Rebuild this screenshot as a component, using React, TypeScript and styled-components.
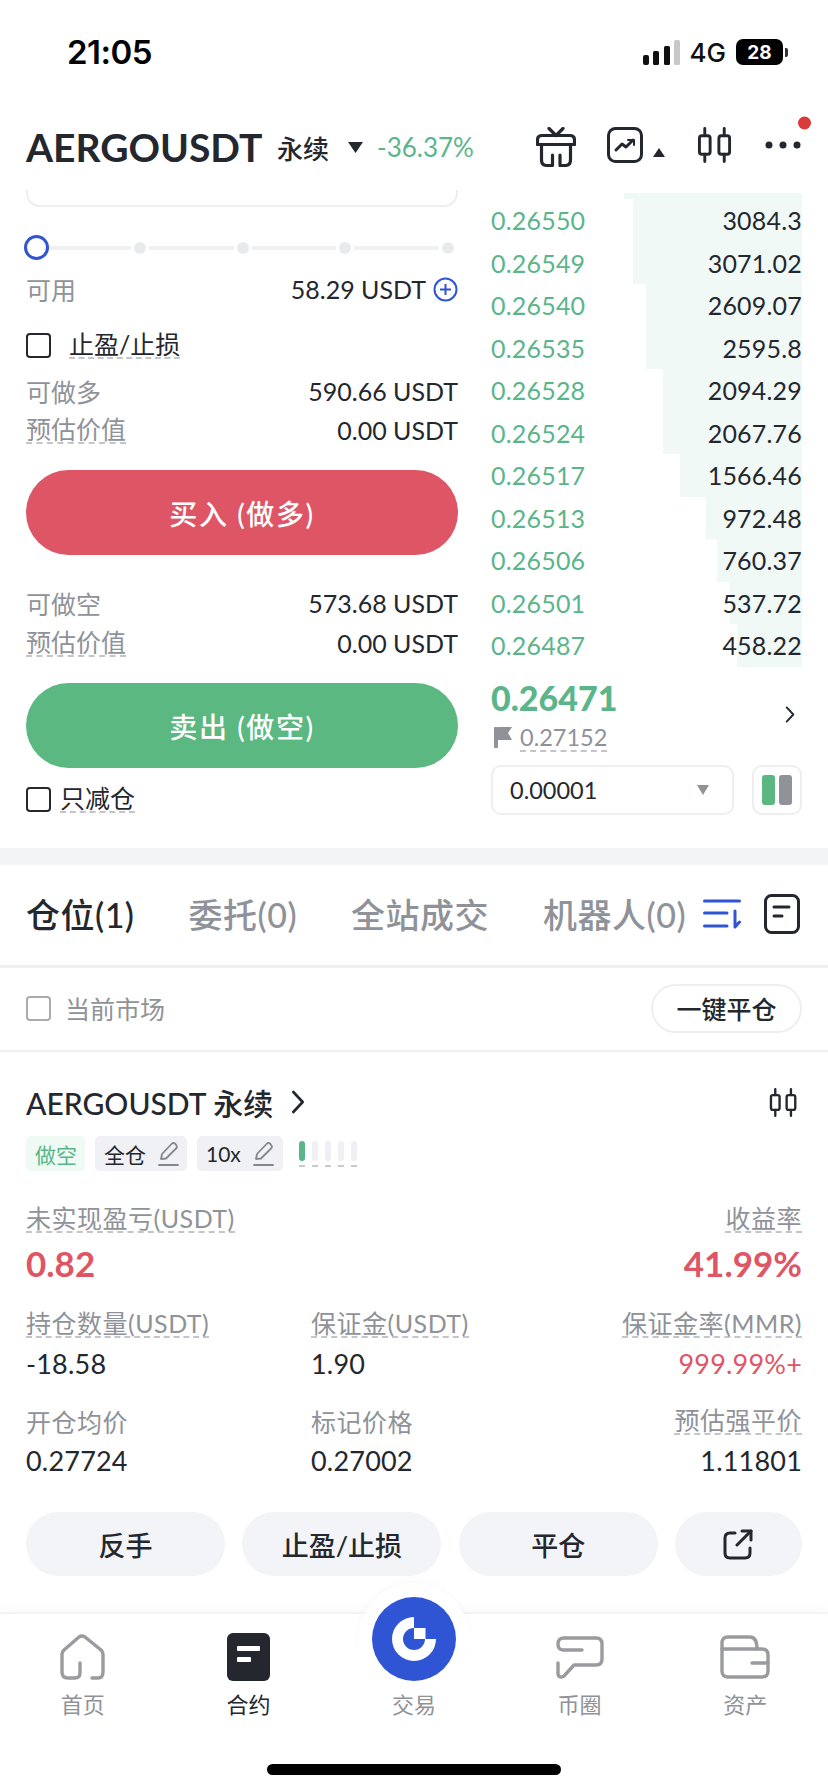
import React from 'react'
import styled, { createGlobalStyle } from 'styled-components'

const GlobalStyle = createGlobalStyle`
    html, body {
        margin: 0;
        padding: 0;
        background: #fff;
    }
    body {
        font-family: Lato, 'Noto Sans CJK SC', sans-serif;
        color: #24272e;
    }
    * {
        box-sizing: border-box;
    }
`

const dark = '#24272e'
const gray = '#8f9298'
const green = '#5bb58a'
const red = '#de5565'
const blue = '#2f55d4'

const Page = styled.div`
    width: 828px;
    height: 1792px;
    overflow: hidden;
    display: flex;
    flex-direction: column;
    background: #fff;
`

const StatusBar = styled.div`
    height: 104px;
    padding: 0 40px 0 67px;
    display: flex;
    align-items: center;
    justify-content: space-between;
`

const Clock = styled.div`
    font-family: Inter, sans-serif;
    font-size: 33px;
    font-weight: 600;
    color: #000;
    letter-spacing: -0.5px;
`

const StatusRight = styled.div`
    display: flex;
    align-items: center;
`

const Network = styled.div`
    margin: 0 10px 0 9px;
    font-family: Inter, sans-serif;
    font-size: 26px;
    font-weight: 500;
    color: #111;
`

const Battery = styled.div`
    width: 47px;
    height: 26px;
    border-radius: 7px;
    background: #000;
    color: #fff;
    font-family: Inter, sans-serif;
    font-size: 19px;
    font-weight: 700;
    display: flex;
    align-items: center;
    justify-content: center;
`

const BatteryCap = styled.div`
    width: 3px;
    height: 9px;
    margin-left: 2px;
    border-radius: 0 2px 2px 0;
    background: #333;
`

const Header = styled.div`
    height: 86px;
    padding-left: 26px;
    display: flex;
    align-items: center;
`

const Pair = styled.div`
    width: 251px;
    font-size: 39px;
    font-weight: 700;
    color: ${dark};
`

const Kind = styled.div`
    width: 71px;
    font-size: 26px;
    font-weight: 500;
`

const Change = styled.div`
    width: 159px;
    margin-left: 14px;
    font-size: 26px;
    color: ${green};
`

const HeaderIcons = styled.div`
    display: flex;
    align-items: flex-start;
`

const IconSlot = styled.div<{ $left: number; $top?: number }>`
    margin-left: ${(props) => props.$left}px;
    margin-top: ${(props) => props.$top || 0}px;
`

const TradeSection = styled.div`
    height: 658px;
    padding: 0 26px;
    display: flex;
    gap: 33px;
`

const LeftColumn = styled.div`
    width: 432px;
    display: flex;
    flex-direction: column;
`

const InputStub = styled.div`
    height: 17px;
    margin-bottom: 28px;
    border: 2px solid #eceef0;
    border-top: 0;
    border-radius: 0 0 14px 14px;
`

const Slider = styled.div`
    height: 25px;
    display: flex;
    align-items: center;
    margin-right: 4px;
`

const SliderThumb = styled.div`
    flex: none;
    position: relative;
    z-index: 1;
    width: 25px;
    height: 25px;
    margin: 0 -6px 0 -2px;
    border: 3px solid ${blue};
    border-radius: 50%;
    background: #fff;
`

const SliderTrack = styled.div`
    flex: 1;
    height: 4px;
    margin: 0 3px;
    background: #eff0f2;
`

const SliderDot = styled.div`
    flex: none;
    width: 12px;
    height: 12px;
    border-radius: 50%;
    background: #e9eaec;
`

const InfoRow = styled.div<{ $top: number }>`
    height: 30px;
    margin-top: ${(props) => props.$top}px;
    display: flex;
    align-items: center;
    justify-content: space-between;
    font-size: 25px;
    white-space: nowrap;
`

const Muted = styled.span`
    color: ${gray};
`

const DashedMuted = styled.span`
    color: ${gray};
    line-height: 26px;
    border-bottom: 2px dashed #c3c5ca;
`

const Dashed = styled.span`
    line-height: 26px;
    border-bottom: 2px dashed #c3c5ca;
`

const Amount = styled.span`
    display: flex;
    align-items: center;
    gap: 7px;
`

const CheckRow = styled.div<{ $top: number; $gap: number }>`
    height: 30px;
    margin-top: ${(props) => props.$top}px;
    display: flex;
    align-items: center;
    gap: ${(props) => props.$gap}px;
    font-size: 25px;
`

const Checkbox = styled.div<{ $muted?: boolean }>`
    width: 25px;
    height: 25px;
    border: 2px solid ${(props) => (props.$muted ? '#a9abb0' : dark)};
    border-radius: 4px;
`

const BigButton = styled.div<{ $color: string; $top: number }>`
    height: 85px;
    margin-top: ${(props) => props.$top}px;
    border-radius: 43px;
    background: ${(props) => props.$color};
    color: #fff;
    font-size: 28px;
    font-weight: 500;
    letter-spacing: 1.6px;
    display: flex;
    align-items: center;
    justify-content: center;
`

const RightColumn = styled.div`
    width: 311px;
    padding-top: 3px;
    display: flex;
    flex-direction: column;
`

const DepthCap = styled.div`
    height: 6px;
    flex: none;
    background: linear-gradient(to left, #f1f9f6 178px, transparent 178px);
`

const BookRow = styled.div<{ $depth: number }>`
    height: 42.5px;
    flex: none;
    display: flex;
    align-items: center;
    justify-content: space-between;
    font-size: 25px;
    letter-spacing: 0.2px;
    background: linear-gradient(to left, #f1f9f6 ${(props) => props.$depth}px, transparent ${(props) => props.$depth}px);
`

const BookPrice = styled.span`
    color: ${green};
`

const PriceBlock = styled.div`
    margin-top: 11px;
    display: flex;
    align-items: center;
    justify-content: space-between;
    padding-right: 7px;
`

const LastPrice = styled.div`
    height: 40px;
    font-size: 34px;
    line-height: 40px;
    font-weight: 900;
    color: ${green};
`

const MarkPrice = styled.div`
    height: 28px;
    margin-top: 6px;
    display: flex;
    align-items: center;
    gap: 8px;
    padding-left: 3px;
    font-size: 23.5px;
`

const BookControls = styled.div`
    margin-top: 13px;
    display: flex;
    justify-content: space-between;
`

const Select = styled.div`
    width: 243px;
    height: 50px;
    padding: 0 23px 0 17px;
    border: 2px solid #eceef0;
    border-radius: 10px;
    display: flex;
    align-items: center;
    justify-content: space-between;
    font-size: 23.5px;
`

const ViewToggle = styled.div`
    width: 50px;
    height: 50px;
    border: 2px solid #eceef0;
    border-radius: 10px;
    display: flex;
    align-items: center;
    justify-content: center;
    gap: 4px;
`

const ToggleBar = styled.div<{ $color: string }>`
    width: 13px;
    height: 30px;
    border-radius: 3px;
    background: ${(props) => props.$color};
`

const Band = styled.div`
    height: 17px;
    background: #f3f4f6;
`

const Tabs = styled.div`
    height: 103px;
    padding: 0 0 3px 26px;
    display: flex;
    align-items: center;
    gap: 54px;
    border-bottom: 3px solid #eff0f2;
    white-space: nowrap;
`

const Tab = styled.div<{ $active?: boolean }>`
    font-size: 34px;
    font-weight: 500;
    letter-spacing: 0.5px;
    color: ${(props) => (props.$active ? dark : gray)};
`

const TabIcons = styled.div`
    margin-left: -37px;
    display: flex;
    align-items: center;
    gap: 23px;
`

const FilterRow = styled.div`
    height: 84px;
    padding: 0 26px 2px;
    display: flex;
    align-items: center;
    justify-content: space-between;
    border-bottom: 2px solid #eff0f2;
`

const FilterLabel = styled.div`
    display: flex;
    align-items: center;
    gap: 14px;
    font-size: 25px;
    color: ${gray};
`

const OutlineButton = styled.div`
    width: 151px;
    height: 49px;
    border: 2px solid #eceef0;
    border-radius: 25px;
    display: flex;
    align-items: center;
    justify-content: center;
    font-size: 25px;
    font-weight: 500;
`

const Position = styled.div`
    flex: 1;
    padding: 32px 26px 0;
    display: flex;
    flex-direction: column;
`

const PositionTitle = styled.div`
    height: 36px;
    padding-right: 4px;
    display: flex;
    align-items: center;
    justify-content: space-between;
`

const TitleText = styled.div`
    display: flex;
    align-items: center;
    gap: 18px;
    font-size: 30px;
    font-weight: 500;
`

const Tags = styled.div`
    height: 35px;
    margin-top: 16px;
    display: flex;
    align-items: center;
`

const Tag = styled.div<{ $bg: string; $color: string; $width: number }>`
    width: ${(props) => props.$width}px;
    height: 35px;
    margin-right: 10px;
    padding-left: 9px;
    border-radius: 5px;
    background: ${(props) => props.$bg};
    color: ${(props) => props.$color};
    font-size: 21px;
    display: flex;
    align-items: center;
    gap: 12px;
`

const Meter = styled.div`
    margin-left: 6px;
    display: flex;
    gap: 7px;
`

const MeterCell = styled.div`
    display: flex;
    flex-direction: column;
    gap: 4px;
`

const MeterBar = styled.div<{ $on?: boolean }>`
    width: 6px;
    height: 20px;
    border-radius: 3px;
    background: ${(props) => (props.$on ? green : '#eff0f3')};
`

const MeterTick = styled.div`
    width: 6px;
    height: 2px;
    background: #c9cacc;
`

const Stats = styled.div`
    margin-top: 33px;
    display: grid;
    grid-template-columns: 285px 1fr auto;
    row-gap: 27px;
`

const Stat = styled.div<{ $right?: boolean }>`
    display: flex;
    flex-direction: column;
    align-items: ${(props) => (props.$right ? 'flex-end' : 'flex-start')};
    gap: 10px;
`

const StatLabel = styled.div`
    height: 30px;
    display: flex;
    align-items: center;
    font-size: 25px;
    letter-spacing: 0.5px;
    white-space: nowrap;
`

const StatValue = styled.div<{ $color?: string }>`
    height: 30px;
    line-height: 30px;
    font-size: 27px;
    letter-spacing: 0.2px;
    color: ${(props) => props.$color || dark};
`

const StatHighlight = styled.div`
    height: 38px;
    line-height: 38px;
    font-size: 35px;
    font-weight: 700;
    color: ${red};
`

const Actions = styled.div`
    margin-top: 36px;
    display: grid;
    grid-template-columns: 199px 199px 199px 127px;
    gap: 17.33px;
`

const ActionButton = styled.div`
    height: 64px;
    border-radius: 32px;
    background: #f2f4f7;
    display: flex;
    align-items: center;
    justify-content: center;
    font-size: 27px;
    font-weight: 500;
`

const TabBar = styled.div`
    height: 180px;
    flex: none;
    position: relative;
    border-top: 2px solid #f3f4f6;
    box-shadow: 0 -6px 10px rgba(40, 50, 70, 0.02);
    background: #fff;
    display: flex;
    flex-direction: column;
    align-items: center;
`

const NavGrid = styled.div`
    width: 100%;
    padding-top: 19px;
    display: grid;
    grid-template-columns: repeat(5, 1fr);
`

const NavItem = styled.div<{ $active?: boolean }>`
    display: flex;
    flex-direction: column;
    align-items: center;
    gap: 9px;
    font-size: 22px;
    line-height: 30px;
    color: ${(props) => (props.$active ? dark : gray)};
`

const NavIcon = styled.div`
    height: 48px;
    display: flex;
    align-items: center;
    justify-content: center;
`

const TradeCircleLayer = styled.div`
    position: relative;
    z-index: 0;
    height: 48px;
`

const TradeCircle = styled.div`
    position: relative;
    width: 84px;
    height: 84px;
    margin-top: -36px;
    border-radius: 50%;
    background: ${blue};
    display: flex;
    align-items: center;
    justify-content: center;
    &::before {
        content: '';
        position: absolute;
        z-index: -1;
        inset: -14px;
        border-radius: 50%;
        background: #fff;
        box-shadow: 0 -3px 6px rgba(40, 50, 70, 0.025);
    }
`

const HomeIndicator = styled.div`
    width: 294px;
    height: 11px;
    margin-top: 44px;
    border-radius: 6px;
    background: #000;
`

const SignalIcon = () => (
    <svg width='38' height='25' viewBox='0 0 38 25'>
        <rect x='0' y='15' width='6' height='10' rx='2' fill='#111' />
        <rect x='10' y='11' width='6' height='14' rx='1.5' fill='#111' />
        <rect x='21' y='6' width='6' height='19' rx='1.5' fill='#111' />
        <rect x='31' y='0' width='6' height='25' rx='1.5' fill='#c8c8ca' />
    </svg>
)

const GiftIcon = () => (
    <svg width='40' height='40' viewBox='0 0 40 40' fill='none' stroke={dark} strokeWidth='3.2' strokeLinecap='round' strokeLinejoin='round'>
        <path d='M13 1.5 L20 8.5 L27 1.5' />
        <path d='M6 8.5 H34 Q38.5 8.5 38.5 13 V17.5 H1.5 V13 Q1.5 8.5 6 8.5 Z' />
        <path d='M5.5 17.5 V33 Q5.5 38.5 11 38.5 H16.5 V28' />
        <path d='M34.5 17.5 V33 Q34.5 38.5 29 38.5 H24 V28' />
    </svg>
)

const ChartIcon = () => (
    <svg width='36' height='36' viewBox='0 0 36 36' fill='none' stroke={dark} strokeWidth='3' strokeLinecap='round' strokeLinejoin='round'>
        <rect x='1.5' y='1.5' width='33' height='33' rx='7' />
        <path d='M9 23 L15 17 L19 20 L26 13' />
        <path d='M21 13 H27 V18' strokeWidth='2' />
    </svg>
)

const CandleIcon = ({ size }: { size: number }) => (
    <svg width={size} height={size} viewBox='0 0 36 37' fill='none' stroke={dark} strokeWidth='3' strokeLinecap='round' strokeLinejoin='round'>
        <rect x='2' y='9' width='11' height='19' rx='2.5' />
        <path d='M7.5 1.5 V9 M7.5 28 V35.5' />
        <rect x='22' y='9' width='11' height='19' rx='2.5' />
        <path d='M27.5 1.5 V9 M27.5 28 V35.5' />
    </svg>
)

const MoreIcon = () => (
    <svg width='50' height='38' viewBox='0 0 50 38' fill={dark}>
        <circle cx='7' cy='29' r='3.5' />
        <circle cx='21' cy='29' r='3.5' />
        <circle cx='35' cy='29' r='3.5' />
        <circle cx='42.5' cy='7' r='6.5' fill='#d93a3a' />
    </svg>
)

const Triangle = ({ up, width, height, color }: { up?: boolean; width: number; height: number; color: string }) => (
    <svg width={width} height={height} viewBox='0 0 10 10' preserveAspectRatio='none' fill={color}>
        <path d={up ? 'M5 0 L10 10 H0 Z' : 'M0 0 H10 L5 10 Z'} />
    </svg>
)

const PlusCircle = () => (
    <svg width='25' height='25' viewBox='0 0 25 25' fill='none' stroke={blue} strokeWidth='2'>
        <circle cx='12.5' cy='12.5' r='11' />
        <path d='M12.5 7 V18 M7 12.5 H18' />
    </svg>
)

const Chevron = ({ width, height, color }: { width: number; height: number; color: string }) => (
    <svg width={width} height={height} viewBox='0 0 10 18' fill='none' stroke={color} strokeWidth='2' strokeLinecap='round' strokeLinejoin='round'>
        <path d='M1.5 1.5 L8.5 9 L1.5 16.5' />
    </svg>
)

const FlagIcon = () => (
    <svg width='18' height='21' viewBox='0 0 18 21' fill={gray}>
        <rect x='0' y='0' width='4' height='21' rx='1' />
        <path d='M4 0 H18 L14 6 L18 13 H4 Z' />
    </svg>
)

const SortIcon = () => (
    <svg width='38' height='30' viewBox='0 0 38 30' fill='none' stroke={blue} strokeWidth='3' strokeLinecap='round' strokeLinejoin='round'>
        <path d='M1.5 2 H36.5 M1.5 14 H24 M1.5 27 H24' />
        <path d='M32 12 V28 L36.5 23' />
    </svg>
)

const DocIcon = () => (
    <svg width='36' height='40' viewBox='0 0 36 40' fill='none' stroke={dark} strokeWidth='3' strokeLinecap='round'>
        <rect x='1.5' y='1.5' width='33' height='37' rx='6' />
        <path d='M10 13 H25 M10 22 H18' />
    </svg>
)

const PencilIcon = () => (
    <svg width='21' height='26' viewBox='0 0 21 26' fill='none' stroke='#85878e' strokeWidth='1.8' strokeLinejoin='round' strokeLinecap='round'>
        <path d='M3 18 L4 13 L14 2.5 Q15.5 1.5 17 2.5 L18.5 4.5 Q19.5 6 18.5 7 L8 17.5 Z' />
        <path d='M1 24 H20' />
    </svg>
)

const ExportIcon = () => (
    <svg width='30' height='31' viewBox='0 0 30 31' fill='none' stroke={dark} strokeWidth='3' strokeLinecap='round' strokeLinejoin='round'>
        <path d='M12 4 H7 Q2 4 2 9 V24 Q2 29 7 29 H22 Q27 29 27 24 V19' />
        <path d='M14 16 L28 2' />
        <path d='M19 2 H28 V11' />
    </svg>
)

const HomeIcon = () => (
    <svg width='45' height='46' viewBox='0 0 45 46' fill='none' stroke='#9a9b9f' strokeWidth='3.4' strokeLinecap='round' strokeLinejoin='round'>
        <path d='M32 44 H38 Q43 44 43 38 V20 Q43 18 41 16 L25 3 Q22 1 19 3 L4 16 Q2 18 2 20 V38 Q2 44 8 44 H15 Q20 44 20 39 V29' />
    </svg>
)

const ContractIcon = () => (
    <svg width='43' height='48' viewBox='0 0 43 48'>
        <rect width='43' height='48' rx='6' fill={dark} />
        <rect x='10' y='13' width='23' height='5' rx='1' fill='#fff' />
        <rect x='10' y='24' width='14' height='5' rx='1' fill='#fff' />
    </svg>
)

const TradeLogo = () => (
    <svg width='44' height='44' viewBox='-22 -22 44 44' fill='#fff'>
        <path d='M0 -22 A22 22 0 1 0 22 0 H11 A11 11 0 1 1 0 -11 Z' />
        <rect x='0' y='-11' width='11.5' height='11' />
    </svg>
)

const ChatIcon = () => (
    <svg width='48' height='43' viewBox='0 0 48 43' fill='none' stroke='#9a9b9f' strokeWidth='3.4' strokeLinecap='round' strokeLinejoin='round'>
        <path d='M26 14 H7 Q2 14 2 8 Q2 2 8 2 H40 Q46 2 46 8 V23 Q46 29 40 29 H18 L8 40 Q2 43 2 37 V27' />
    </svg>
)

const WalletIcon = () => (
    <svg width='50' height='44' viewBox='0 0 50 44' fill='none' stroke='#9a9b9f' strokeWidth='3.4' strokeLinecap='round' strokeLinejoin='round'>
        <path d='M32 28 H48 V36 Q48 42 42 42 H8 Q2 42 2 36 V8 Q2 2 8 2 H30 Q37 2 37 14' />
        <path d='M2 14 H42 Q48 14 48 20 V28' />
    </svg>
)

const book: [string, string, number][] = [
    ['0.26550', '3084.3', 169],
    ['0.26549', '3071.02', 169],
    ['0.26540', '2609.07', 156],
    ['0.26535', '2595.8', 156],
    ['0.26528', '2094.29', 139],
    ['0.26524', '2067.76', 139],
    ['0.26517', '1566.46', 122],
    ['0.26513', '972.48', 96],
    ['0.26506', '760.37', 85],
    ['0.26501', '537.72', 72],
    ['0.26487', '458.22', 65],
]

const App = () => {
    return (
        <Page>
            <GlobalStyle />
            <StatusBar>
                <Clock>21:05</Clock>
                <StatusRight>
                    <SignalIcon />
                    <Network>4G</Network>
                    <Battery>28</Battery>
                    <BatteryCap />
                </StatusRight>
            </StatusBar>

            <Header>
                <Pair>AERGOUSDT</Pair>
                <Kind>永续</Kind>
                <Triangle width={15} height={11} color={dark} />
                <Change>-36.37%</Change>
                <HeaderIcons>
                    <GiftIcon />
                    <IconSlot $left={31}><ChartIcon /></IconSlot>
                    <IconSlot $left={10} $top={14}><Triangle up width={12} height={9} color={dark} /></IconSlot>
                    <IconSlot $left={32}><CandleIcon size={36} /></IconSlot>
                    <IconSlot $left={29} $top={-11}><MoreIcon /></IconSlot>
                </HeaderIcons>
            </Header>

            <TradeSection>
                <LeftColumn>
                    <InputStub />
                    <Slider>
                        <SliderThumb />
                        <SliderTrack />
                        <SliderDot />
                        <SliderTrack />
                        <SliderDot />
                        <SliderTrack />
                        <SliderDot />
                        <SliderTrack />
                        <SliderDot />
                    </Slider>
                    <InfoRow $top={14}>
                        <Muted>可用</Muted>
                        <Amount>
                            58.29 USDT
                            <PlusCircle />
                        </Amount>
                    </InfoRow>
                    <CheckRow $top={26} $gap={18}>
                        <Checkbox />
                        <Dashed>止盈/止损</Dashed>
                    </CheckRow>
                    <InfoRow $top={16}>
                        <Muted>可做多</Muted>
                        <span>590.66 USDT</span>
                    </InfoRow>
                    <InfoRow $top={9}>
                        <DashedMuted>预估价值</DashedMuted>
                        <span>0.00 USDT</span>
                    </InfoRow>
                    <BigButton $color={red} $top={25}>买入 (做多)</BigButton>
                    <InfoRow $top={33}>
                        <Muted>可做空</Muted>
                        <span>573.68 USDT</span>
                    </InfoRow>
                    <InfoRow $top={10}>
                        <DashedMuted>预估价值</DashedMuted>
                        <span>0.00 USDT</span>
                    </InfoRow>
                    <BigButton $color='#5bb880' $top={25}>卖出 (做空)</BigButton>
                    <CheckRow $top={16} $gap={9}>
                        <Checkbox />
                        <Dashed>只减仓</Dashed>
                    </CheckRow>
                </LeftColumn>

                <RightColumn>
                    <DepthCap />
                    {book.map(([price, size, depth]) => (
                        <BookRow key={price} $depth={depth}>
                            <BookPrice>{price}</BookPrice>
                            <span>{size}</span>
                        </BookRow>
                    ))}
                    <PriceBlock>
                        <div>
                            <LastPrice>0.26471</LastPrice>
                            <MarkPrice>
                                <FlagIcon />
                                <DashedMuted>0.27152</DashedMuted>
                            </MarkPrice>
                        </div>
                        <Chevron width={10} height={17} color={dark} />
                    </PriceBlock>
                    <BookControls>
                        <Select>
                            0.00001
                            <Triangle width={12} height={10} color={gray} />
                        </Select>
                        <ViewToggle>
                            <ToggleBar $color='#5bb880' />
                            <ToggleBar $color='#8f9298' />
                        </ViewToggle>
                    </BookControls>
                </RightColumn>
            </TradeSection>

            <Band />

            <Tabs>
                <Tab $active>仓位(1)</Tab>
                <Tab>委托(0)</Tab>
                <Tab>全站成交</Tab>
                <Tab>机器人(0)</Tab>
                <TabIcons>
                    <SortIcon />
                    <DocIcon />
                </TabIcons>
            </Tabs>

            <FilterRow>
                <FilterLabel>
                    <Checkbox $muted />
                    当前市场
                </FilterLabel>
                <OutlineButton>一键平仓</OutlineButton>
            </FilterRow>

            <Position>
                <PositionTitle>
                    <TitleText>
                        AERGOUSDT 永续
                        <Chevron width={14} height={24} color={dark} />
                    </TitleText>
                    <CandleIcon size={29} />
                </PositionTitle>
                <Tags>
                    <Tag $bg='#eefaf3' $color={green} $width={59}>做空</Tag>
                    <Tag $bg='#f0f1f5' $color={dark} $width={92}>全仓<PencilIcon /></Tag>
                    <Tag $bg='#f0f1f5' $color={dark} $width={86}>10x<PencilIcon /></Tag>
                    <Meter>
                        <MeterCell><MeterBar $on /><MeterTick /></MeterCell>
                        <MeterCell><MeterBar /><MeterTick /></MeterCell>
                        <MeterCell><MeterBar /><MeterTick /></MeterCell>
                        <MeterCell><MeterBar /><MeterTick /></MeterCell>
                        <MeterCell><MeterBar /><MeterTick /></MeterCell>
                    </Meter>
                </Tags>
                <Stats>
                    <Stat>
                        <StatLabel><DashedMuted>未实现盈亏(USDT)</DashedMuted></StatLabel>
                        <StatHighlight>0.82</StatHighlight>
                    </Stat>
                    <div />
                    <Stat $right>
                        <StatLabel><DashedMuted>收益率</DashedMuted></StatLabel>
                        <StatHighlight>41.99%</StatHighlight>
                    </Stat>
                    <Stat>
                        <StatLabel><DashedMuted>持仓数量(USDT)</DashedMuted></StatLabel>
                        <StatValue>-18.58</StatValue>
                    </Stat>
                    <Stat>
                        <StatLabel><DashedMuted>保证金(USDT)</DashedMuted></StatLabel>
                        <StatValue>1.90</StatValue>
                    </Stat>
                    <Stat $right>
                        <StatLabel><DashedMuted>保证金率(MMR)</DashedMuted></StatLabel>
                        <StatValue $color={red}>999.99%+</StatValue>
                    </Stat>
                    <Stat>
                        <StatLabel><Muted>开仓均价</Muted></StatLabel>
                        <StatValue>0.27724</StatValue>
                    </Stat>
                    <Stat>
                        <StatLabel><Muted>标记价格</Muted></StatLabel>
                        <StatValue>0.27002</StatValue>
                    </Stat>
                    <Stat $right>
                        <StatLabel><DashedMuted>预估强平价</DashedMuted></StatLabel>
                        <StatValue>1.11801</StatValue>
                    </Stat>
                </Stats>
                <Actions>
                    <ActionButton>反手</ActionButton>
                    <ActionButton>止盈/止损</ActionButton>
                    <ActionButton>平仓</ActionButton>
                    <ActionButton><ExportIcon /></ActionButton>
                </Actions>
            </Position>

            <TabBar>
                <NavGrid>
                    <NavItem>
                        <NavIcon><HomeIcon /></NavIcon>
                        首页
                    </NavItem>
                    <NavItem $active>
                        <NavIcon><ContractIcon /></NavIcon>
                        合约
                    </NavItem>
                    <NavItem>
                        <TradeCircleLayer>
                            <TradeCircle><TradeLogo /></TradeCircle>
                        </TradeCircleLayer>
                        交易
                    </NavItem>
                    <NavItem>
                        <NavIcon><ChatIcon /></NavIcon>
                        币圈
                    </NavItem>
                    <NavItem>
                        <NavIcon><WalletIcon /></NavIcon>
                        资产
                    </NavItem>
                </NavGrid>
                <HomeIndicator />
            </TabBar>
        </Page>
    )
}

export default App
